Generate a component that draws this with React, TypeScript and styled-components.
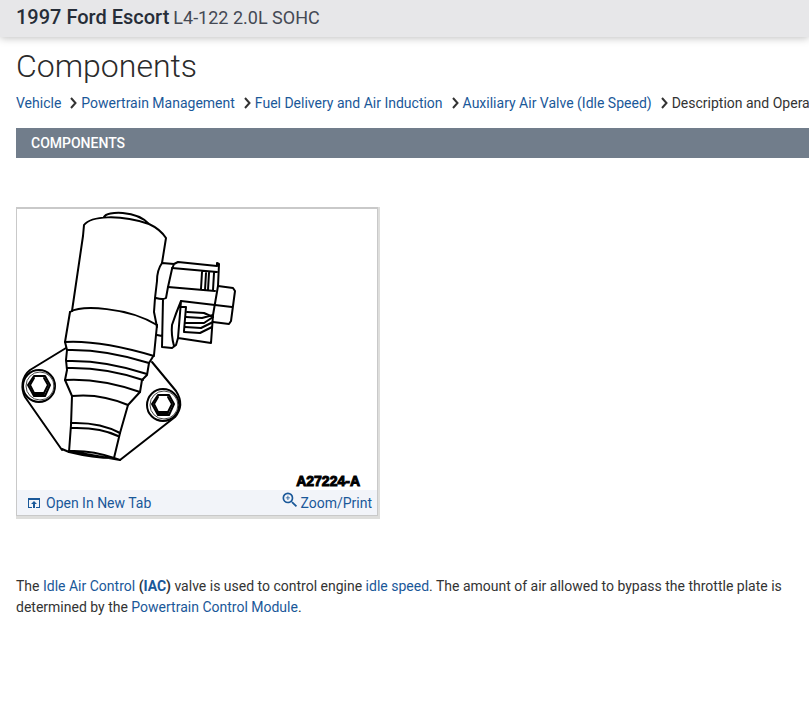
import React from "react";
import styled, { createGlobalStyle } from "styled-components";

const GlobalStyle = createGlobalStyle`
  *, *::before, *::after { box-sizing: border-box; }
  body {
    margin: 0;
    background: #fff;
    color: #333;
    font-family: Roboto, "Liberation Sans", sans-serif;
    font-size: 14px;
    line-height: 21px;
    overflow-x: hidden;
  }
`;

const VehicleBar = styled.header`
  display: flex;
  align-items: baseline;
  gap: 4px;
  height: 37px;
  padding: 7px 16px 0;
  background: #e7e7e9;
  box-shadow: 0 1px 8px rgba(0, 0, 0, 0.26);
  font-size: 18px;
  color: #444954;
  white-space: nowrap;
`;

const VehicleName = styled.strong`
  font-size: 20px;
  font-weight: 500;
  color: #262d38;
`;

const Content = styled.main`
  padding: 9px 0 24px 16px;
`;

const Title = styled.h1`
  margin: 0;
  font-size: 32px;
  line-height: 40px;
  font-weight: 300;
  color: #2b2b2b;
`;

const Breadcrumbs = styled.nav`
  display: flex;
  align-items: center;
  margin-top: 7px;
  overflow: hidden;
  white-space: nowrap;
`;

const Link = styled.a`
  color: #1a5899;
  text-decoration: none;
`;

const Chevron = styled.svg`
  flex: none;
  width: 7px;
  height: 12px;
  margin: 0 4px 2px 9px;
  fill: none;
  stroke: #333;
  stroke-width: 2;
`;

const SectionHeading = styled.h2`
  margin: 14px 0 0;
  padding: 0 15px;
  background: #717d8b;
  color: #fff;
  font-size: 14px;
  line-height: 30px;
  font-weight: 500;
`;

const Figure = styled.figure`
  width: 364px;
  max-width: 100%;
  margin: 49px 0 0;
  padding: 0 2px 3px 0;
  background: #dededc;
`;

const Frame = styled.div`
  border: 1px solid #c9c9c9;
  border-top-width: 2px;
  background: #fff;
`;

const Drawing = styled.svg`
  display: block;
  width: 100%;
  fill: none;
  stroke: #000;
  stroke-width: 2;
  stroke-linejoin: round;
  stroke-linecap: round;
`;

const Caption = styled.figcaption`
  padding: 0 17px 0 0;
  text-align: right;
  font: bold 14px/18px "Liberation Sans", Arial, sans-serif;
  -webkit-text-stroke: 1px #000;
  color: #000;
`;

const FigureActions = styled.div`
  display: flex;
  align-items: center;
  justify-content: space-between;
  height: 25px;
  padding: 2px 5px 0 11px;
  background: #f2f4f9;
`;

const ActionLink = styled(Link)`
  display: flex;
  align-items: center;
  gap: 6px;
`;

const ActionIcon = styled.svg<{ $size: number; $raised?: boolean }>`
  width: ${(p) => p.$size}px;
  height: ${(p) => p.$size}px;
  margin-bottom: ${(p) => (p.$raised ? 7 : 2)}px;
  margin-right: ${(p) => (p.$raised ? -6 : 0)}px;
  fill: currentColor;
`;

const Description = styled.p`
  margin: 57px 0 0;
  padding-right: 16px;
`;

const Term = styled.strong`
  font-weight: 700;
`;

const crumbs = [
  "Vehicle",
  "Powertrain Management",
  "Fuel Delivery and Air Induction",
  "Auxiliary Air Valve (Idle Speed)",
];

function Bolt({ x, y }: { x: number; y: number }) {
  return (
    <g transform={`translate(${x} ${y})`}>
      <circle r="16" />
      <circle cx="1" r="14" strokeWidth="1" stroke="#444" />
      <path d="M-5-10H6L11-1 6 10H-5L-11-1Z" />
      <path d="M-5-8L-9-1-5 7H5L9-1 5-8" />
      <path d="M-5 8H5" />
    </g>
  );
}

function ValveDrawing() {
  return (
    <Drawing viewBox="17 209 360 263" role="img" aria-label="Idle air control valve">
      <path d="M84 225C91 216 119 214 149 224Q160 229 166 238L162 263M84 225L83 236 72 311M104 217C107 211 136 210 149 224" />
      <path d="M70 312C82 305 127 307 157 325" />
      <path d="M70 312L65 342 67 350 66 360 67 370 65 380 72 396 71 425 69 452" />
      <path d="M157 325L154 355 149 363 147 375 142 380 140 392 128 405 120 433 114 458" />
      <path d="M65 342Q100 340 154 356M67 350Q105 349 149 363M67 361Q105 360 147 374M67 368Q105 367 143 380M65 380Q100 378 140 392M72 396Q100 393 128 405M71 423Q100 422 120 433M71 428Q100 427 118 436" />
      <path d="M62 449L69 452Q93 458 114 458L120 460 69 451Q92 450 114 458" />
      <path d="M66 348L30 370C21 377 21 389 25 397L62 450M152 362L176 391Q185 405 175 417L120 460" />
      <Bolt x={39} y={386} />
      <Bolt x={163} y={405} />
      <path d="M162 263Q157 270 157 281L155 298 154 312 157 327M162 263L174 264 178 262 217 266V263L219 264 218 286 213 315 211 343 178 338M174 264L172 269 168 287 166 298Q163 300 156 298M163 299L162 347 172 348 176 345 178 338 181 301Q176 313 172 325 171 335 174 346M182 307L186 307 184 331M157 335L162 336" />
      <path d="M172 268L217 272M168 287L215 291M202 272L201 289M206 273L205 290M209 273L208 290M214 273L213 290M218 286L233 288 235 291 231 321 229 324 213 322M181 301L232 307" />
      <path d="M187 312L204 313 213 317M186 317L202 318 213 315M213 317L204 323H185M185 327L201 328 213 322M184 332L200 333 212 327" />
    </Drawing>
  );
}

export default function App() {
  return (
    <>
      <GlobalStyle />
      <VehicleBar>
        <VehicleName>1997 Ford Escort</VehicleName>
        <span>L4-122 2.0L SOHC</span>
      </VehicleBar>
      <Content>
        <Title>Components</Title>
        <Breadcrumbs aria-label="Breadcrumb">
          {crumbs.map((crumb) => (
            <React.Fragment key={crumb}>
              <Link href="#">{crumb}</Link>
              <Chevron viewBox="0 0 7 12" aria-hidden="true">
                <path d="M1 1L5.5 6 1 11" />
              </Chevron>
            </React.Fragment>
          ))}
          <span>Description and Operation</span>
        </Breadcrumbs>
        <SectionHeading>COMPONENTS</SectionHeading>
        <Figure>
          <Frame>
            <ValveDrawing />
            <Caption>A27224-A</Caption>
            <FigureActions>
              <ActionLink href="#">
                <ActionIcon $size={12} viewBox="0 0 12 12" aria-hidden="true">
                  <path d="M0 1H12V11H8V10H11V3H1V10H4V11H0ZM6 4L9 7H7V11H5V7H3Z" />
                </ActionIcon>
                Open In New Tab
              </ActionLink>
              <ActionLink href="#">
                <ActionIcon $size={20} $raised viewBox="0 0 24 24" aria-hidden="true">
                  <path d="M15.5 14h-.79l-.28-.27A6.47 6.47 0 0 0 16 9.5 6.5 6.5 0 1 0 9.5 16c1.61 0 3.09-.59 4.23-1.57l.27.28v.79l5 4.99L20.49 19l-4.99-5zm-6 0C7.01 14 5 11.99 5 9.5S7.01 5 9.5 5 14 7.01 14 9.5 11.99 14 9.5 14zM12 10h-2v2H9v-2H7V9h2V7h1v2h2v1z" />
                </ActionIcon>
                Zoom/Print
              </ActionLink>
            </FigureActions>
          </Frame>
        </Figure>
        <Description>
          The <Link href="#">Idle Air Control</Link>{" "}
          <Term>
            (<Link href="#">IAC</Link>)
          </Term>{" "}
          valve is used to control engine <Link href="#">idle speed</Link>. The amount of air
          allowed to bypass the throttle plate is determined by the{" "}
          <Link href="#">Powertrain Control Module</Link>.
        </Description>
      </Content>
    </>
  );
}
